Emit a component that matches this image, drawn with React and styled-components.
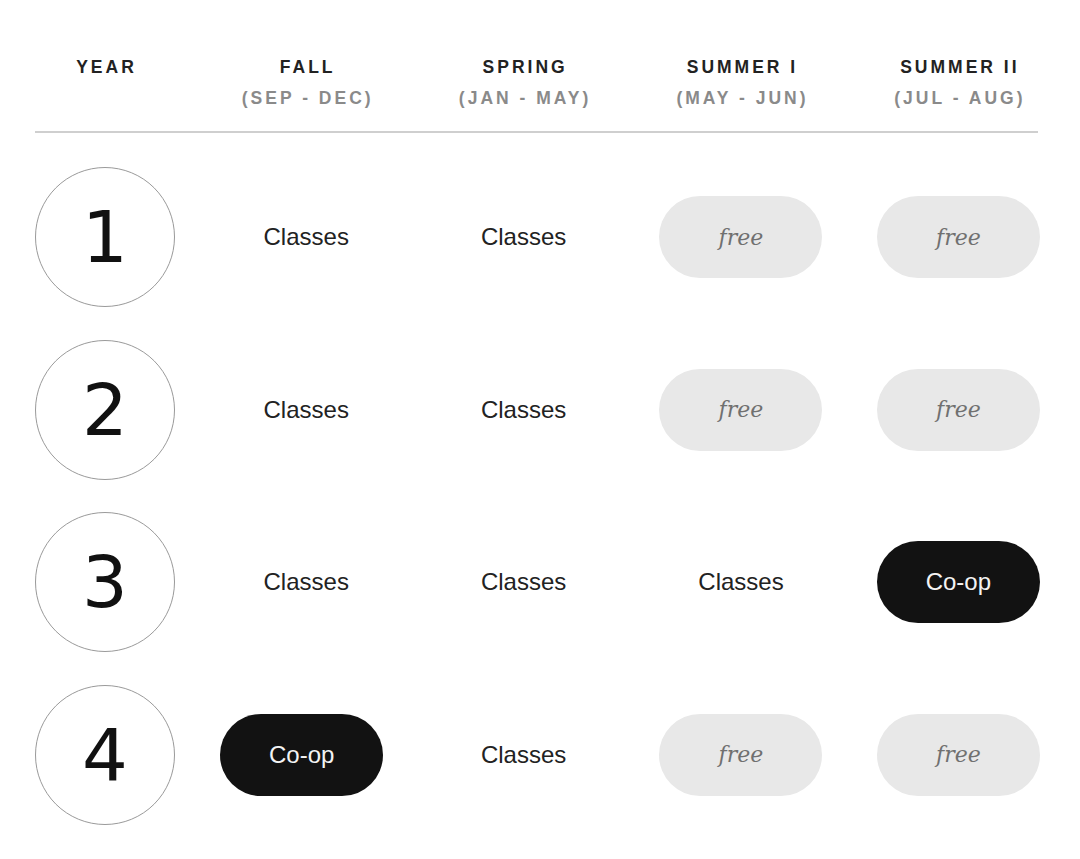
import React from 'react';
import styled, { createGlobalStyle } from 'styled-components';

const GlobalStyle = createGlobalStyle`
  body {
    margin: 0;
    background: #ffffff;
    font-family: "Liberation Sans", Arial, sans-serif;
  }
`;

const terms = [
  { name: 'FALL', months: '(SEP - DEC)' },
  { name: 'SPRING', months: '(JAN - MAY)' },
  { name: 'SUMMER I', months: '(MAY - JUN)' },
  { name: 'SUMMER II', months: '(JUL - AUG)' },
];

const years = [
  { year: 1, plan: ['classes', 'classes', 'free', 'free'] },
  { year: 2, plan: ['classes', 'classes', 'free', 'free'] },
  { year: 3, plan: ['classes', 'classes', 'classes', 'coop'] },
  { year: 4, plan: ['coop', 'classes', 'free', 'free'] },
];

function Cell({ kind, first }) {
  if (kind === 'free') return <Pill variant="free">free</Pill>;
  if (kind === 'coop') return <Pill variant="coop" $shift={first}>Co-op</Pill>;
  return <Plain>Classes</Plain>;
}

export default function App() {
  return (
    <>
      <GlobalStyle />
      <Page>
        <HeaderRow>
          <YearHead>YEAR</YearHead>
          {terms.map((t) => (
            <TermHead key={t.name}>
              <span>{t.name}</span>
              <small>{t.months}</small>
            </TermHead>
          ))}
        </HeaderRow>
        <Divider />
        <Body>
          {years.map((y) => (
            <Row key={y.year}>
              <YearBadge>{y.year}</YearBadge>
              {y.plan.map((kind, i) => (
                <Slot key={i}>
                  <Cell kind={kind} first={i === 0} />
                </Slot>
              ))}
            </Row>
          ))}
        </Body>
      </Page>
    </>
  );
}

const Page = styled.div`
  padding: 52px 0 0 35px;
  width: 1080px;
  box-sizing: border-box;
`;

const columns = `
  display: grid;
  grid-template-columns: 162.5px repeat(4, 217.4px);
  align-items: center;
`;

const HeaderRow = styled.div`
  ${columns}
  align-items: start;
`;

const headText = `
  font-family: "Liberation Sans", Arial, sans-serif;
  font-weight: 700;
  font-size: 17.5px;
  letter-spacing: 3px;
  line-height: 31px;
  color: #222;
`;

const YearHead = styled.div`
  ${headText}
  width: 140px;
  text-align: center;
  padding-left: 3px;
  box-sizing: border-box;
`;

const TermHead = styled.div`
  ${headText}
  display: flex;
  flex-direction: column;
  align-items: center;
  padding-left: 3px;

  small {
    font-size: 17.5px;
    font-weight: 700;
    color: #8a8a8a;
  }
`;

const Divider = styled.hr`
  width: 1003px;
  margin: 17px 0 34px 0;
  border: none;
  height: 2px;
  background: #cfcfcf;
`;

const Body = styled.div`
  display: flex;
  flex-direction: column;
  gap: 32.5px;
`;

const Row = styled.div`
  ${columns}
  height: 140px;
`;

const YearBadge = styled.div`
  width: 138px;
  height: 138px;
  border: 1px solid #9a9a9a;
  border-radius: 50%;
  display: flex;
  align-items: center;
  justify-content: center;
  font-family: "DejaVu Sans", sans-serif;
  font-size: 72px;
  color: #111;
  line-height: 1;
`;

const Slot = styled.div`
  display: flex;
  justify-content: center;
  align-items: center;
`;

const Plain = styled.span`
  font-family: "Liberation Sans", Arial, sans-serif;
  font-size: 24px;
  color: #222;
`;

const Pill = styled.div`
  width: 163px;
  height: 82px;
  border-radius: 41px;
  display: flex;
  align-items: center;
  justify-content: center;
  background: ${(p) => (p.variant === 'coop' ? '#121212' : '#e8e8e8')};
  color: ${(p) => (p.variant === 'coop' ? '#f4f4f4' : '#707070')};
  font-family: ${(p) =>
    p.variant === 'coop'
      ? '"Liberation Sans", Arial, sans-serif'
      : '"DejaVu Serif", "Liberation Serif", serif'};
  font-style: ${(p) => (p.variant === 'coop' ? 'normal' : 'italic')};
  font-size: ${(p) => (p.variant === 'coop' ? '24px' : '22px')};
  margin-right: ${(p) => (p.$shift ? '9px' : '0')};
`;
